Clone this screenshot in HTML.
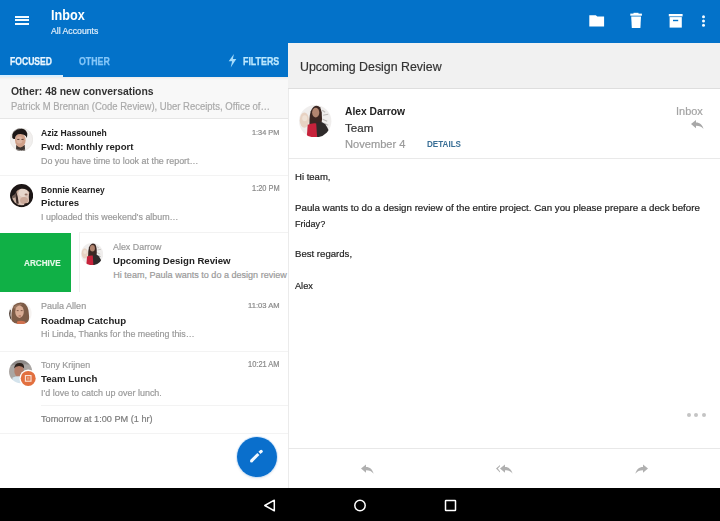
<!DOCTYPE html>
<html><head><meta charset="utf-8"><style>
html,body{margin:0;padding:0;}
body{width:720px;height:521px;overflow:hidden;position:relative;background:#fff;font-family:"Liberation Sans", sans-serif;}
.t{position:absolute;white-space:nowrap;line-height:1;transform-origin:0 0;}
</style></head><body>
<div style="position:absolute;left:0;top:0;width:720px;height:43px;background:#0372C9"></div><div style="position:absolute;left:0;top:43px;width:288px;height:34px;background:#0372C9"></div><div style="position:absolute;left:15.3px;top:15.7px;width:13.6px;height:2px;background:#f4fbff"></div><div style="position:absolute;left:15.3px;top:19.4px;width:13.6px;height:2px;background:#f4fbff"></div><div style="position:absolute;left:15.3px;top:23.4px;width:13.6px;height:2px;background:#f4fbff"></div><div class="t" style="left:50.50px;top:8.00px;font-size:14.24px;color:#fff;font-weight:700;transform:scaleX(0.8897);">Inbox</div>
<div class="t" style="left:50.50px;top:27.00px;font-size:9.16px;color:#e0eefa;font-weight:400;transform:scaleX(0.9483);-webkit-text-stroke:0.2px currentColor;">All Accounts</div>
<div class="t" style="left:9.70px;top:57.00px;font-size:10.30px;color:#eaf6ff;font-weight:700;transform:scaleX(0.8340);-webkit-text-stroke:0.25px currentColor;">FOCUSED</div>
<div class="t" style="left:79.20px;top:57.00px;font-size:10.30px;color:#84c6f8;font-weight:700;transform:scaleX(0.8544);-webkit-text-stroke:0.25px currentColor;">OTHER</div>
<div class="t" style="left:242.80px;top:57.00px;font-size:10.30px;color:#bde8fd;font-weight:700;transform:scaleX(0.8589);-webkit-text-stroke:0.25px currentColor;">FILTERS</div>
<svg style="position:absolute;left:227px;top:53px" width="11" height="15" viewBox="0 0 11 15"><path d="M6.9 0.9 L1.7 8.3 L5.1 8.3 L3.7 14.4 L9.3 6.1 L5.9 6.1 Z" fill="#a6dcfb"/></svg><div style="position:absolute;left:0;top:75px;width:63px;height:2px;background:#d8efff"></div><svg style="position:absolute;left:585px;top:8px" width="130" height="24" viewBox="585 8 130 24">
<path d="M589.3 15.3 H595.8 L597.3 16.6 H604.1 V26.5 H589.3 Z" fill="#fff"/>
<rect x="630.3" y="13.6" width="11.6" height="2.1" fill="#fff"/>
<rect x="633.5" y="12.8" width="5" height="1.2" fill="#fff"/>
<path d="M631.2 16.6 H641 L640.4 28 H631.8 Z" fill="#fff"/>
<rect x="668.8" y="14" width="13.8" height="2.4" fill="#fff"/>
<path d="M669.6 17.1 H681.8 V27.6 H669.6 Z" fill="#fff"/>
<rect x="673" y="19.8" width="5.2" height="1.4" fill="#0372C9"/>
<circle cx="703.5" cy="16.7" r="1.5" fill="#f4fbff"/>
<circle cx="703.5" cy="21" r="1.5" fill="#f4fbff"/>
<circle cx="703.5" cy="25.3" r="1.5" fill="#f4fbff"/>
</svg><div style="position:absolute;left:0;top:77px;width:288px;height:42px;background:#f8f8f8;border-bottom:1px solid #e6e6e6;box-sizing:border-box"></div><div style="position:absolute;left:0;top:77px;width:288px;height:3px;background:linear-gradient(#ececec,#f8f8f8)"></div><div class="t" style="left:11.10px;top:85.00px;font-size:11.63px;color:#333;font-weight:700;transform:scaleX(0.8977);">Other: 48 new conversations</div>
<div class="t" style="left:11.00px;top:101.00px;font-size:10.61px;color:#aaa;font-weight:400;transform:scaleX(0.8951);-webkit-text-stroke:0.2px currentColor;">Patrick M Brennan (Code Review), Uber Receipts, Office of…</div>
<div style="position:absolute;left:0;top:175px;width:288px;height:1px;background:#f3f3f3"></div><div style="position:absolute;left:0;top:351px;width:288px;height:1px;background:#f3f3f3"></div><div style="position:absolute;left:0;top:433px;width:288px;height:1px;background:#f3f3f3"></div><div class="t" style="left:41.10px;top:129.00px;font-size:9.16px;color:#222;font-weight:700;transform:scaleX(0.9350);">Aziz Hassouneh</div>
<div class="t" style="left:41.10px;top:142.00px;font-size:9.88px;color:#222;font-weight:700;transform:scaleX(0.9754);">Fwd: Monthly report</div>
<div class="t" style="left:41.10px;top:157.00px;font-size:9.01px;color:#9a9a9a;font-weight:400;transform:scaleX(0.9897);-webkit-text-stroke:0.2px currentColor;">Do you have time to look at the report…</div>
<div class="t" style="left:252.30px;top:129.00px;font-size:7.41px;color:#8a8a8a;font-weight:400;transform:scaleX(0.9889);-webkit-text-stroke:0.2px currentColor;">1:34 PM</div>
<div class="t" style="left:41.10px;top:186.00px;font-size:9.16px;color:#222;font-weight:700;transform:scaleX(0.9138);">Bonnie Kearney</div>
<div class="t" style="left:41.10px;top:198.00px;font-size:9.88px;color:#222;font-weight:700;transform:scaleX(0.9782);">Pictures</div>
<div class="t" style="left:41.10px;top:213.00px;font-size:9.01px;color:#9a9a9a;font-weight:400;transform:scaleX(0.9869);-webkit-text-stroke:0.2px currentColor;">I uploaded this weekend's album…</div>
<div class="t" style="left:252.30px;top:185.00px;font-size:8.28px;color:#8a8a8a;font-weight:400;transform:scaleX(0.8978);-webkit-text-stroke:0.2px currentColor;">1:20 PM</div>
<div style="position:absolute;left:0;top:233px;width:71px;height:59px;background:#10b046"></div><div class="t" style="left:24.20px;top:258.00px;font-size:9.45px;color:#e4f8e8;font-weight:700;transform:scaleX(0.8654);-webkit-text-stroke:0.15px currentColor;">ARCHIVE</div>
<div style="position:absolute;left:79px;top:232px;width:209px;height:60px;border-left:1px solid #f0f0f0;border-top:1px solid #f2f2f2;box-sizing:border-box"></div><div style="position:absolute;left:71px;top:233px;width:217px;height:59px;overflow:hidden"><div class="t" style="left:42.30px;top:10.00px;font-size:9.16px;color:#9a9a9a;font-weight:400;transform:scaleX(0.9710);-webkit-text-stroke:0.2px currentColor;">Alex Darrow</div>
<div class="t" style="left:42.30px;top:23.00px;font-size:9.88px;color:#222;font-weight:700;transform:scaleX(0.9739);">Upcoming Design Review</div>
<div class="t" style="left:42.30px;top:38.00px;font-size:9.05px;color:#9a9a9a;font-weight:400;-webkit-text-stroke:0.2px currentColor;">Hi team, Paula wants to do a design review of the entire project</div>
</div><div class="t" style="left:41.10px;top:302.00px;font-size:9.16px;color:#9a9a9a;font-weight:400;transform:scaleX(0.9853);-webkit-text-stroke:0.2px currentColor;">Paula Allen</div>
<div class="t" style="left:41.10px;top:316.00px;font-size:9.88px;color:#222;font-weight:700;transform:scaleX(0.9752);">Roadmap Catchup</div>
<div class="t" style="left:41.10px;top:330.00px;font-size:9.01px;color:#9a9a9a;font-weight:400;transform:scaleX(0.9890);-webkit-text-stroke:0.2px currentColor;">Hi Linda, Thanks for the meeting this…</div>
<div class="t" style="left:248.30px;top:302.00px;font-size:7.56px;color:#8a8a8a;font-weight:400;transform:scaleX(1.0072);-webkit-text-stroke:0.2px currentColor;">11:03 AM</div>
<div class="t" style="left:41.30px;top:361.00px;font-size:9.16px;color:#9a9a9a;font-weight:400;transform:scaleX(0.9744);-webkit-text-stroke:0.2px currentColor;">Tony Krijnen</div>
<div class="t" style="left:41.30px;top:374.00px;font-size:9.88px;color:#222;font-weight:700;transform:scaleX(0.9813);">Team Lunch</div>
<div class="t" style="left:41.30px;top:389.00px;font-size:9.01px;color:#9a9a9a;font-weight:400;transform:scaleX(0.9963);-webkit-text-stroke:0.2px currentColor;">I'd love to catch up over lunch.</div>
<div class="t" style="left:248.00px;top:361.00px;font-size:8.14px;color:#8a8a8a;font-weight:400;transform:scaleX(0.9189);-webkit-text-stroke:0.2px currentColor;">10:21 AM</div>
<div style="position:absolute;left:41px;top:405px;width:247px;height:1px;background:#f3f3f3"></div><div class="t" style="left:41.30px;top:414.00px;font-size:9.74px;color:#7c7c7c;font-weight:400;transform:scaleX(0.9425);-webkit-text-stroke:0.2px currentColor;">Tomorrow at 1:00 PM (1 hr)</div>
<svg style="position:absolute;left:9.5px;top:128.0px" width="23.0" height="23.0" viewBox="-11.5 -11.5 23.0 23.0"><defs><clipPath id="c210_1395"><circle r="11.5"/></clipPath><filter id="f210_1395" x="-50%" y="-50%" width="200%" height="200%"><feGaussianBlur stdDeviation="0.6"/></filter></defs><g clip-path="url(#c210_1395)"><g filter="url(#f210_1395)"><rect x="-13" y="-13" width="26" height="26" fill="#f1efee"/><path d="M-5.8 13 L-5.2 5.5 H3.2 L3.8 13 Z" fill="#3e3530"/><ellipse cx="-1.2" cy="0.8" rx="5.3" ry="7.1" fill="#cfa089"/><ellipse cx="-2" cy="0.5" rx="3" ry="3.6" fill="#dcb5a2"/><path d="M-9.3 -2 Q-10 -9.5 -3 -11.2 Q4 -12 5.8 -6 Q6 -3 5 -1.5 Q4.5 -5 -1 -5.4 Q-6 -5.5 -6.6 -0.5 Q-8.5 0 -9.3 -2 Z" fill="#1f1815"/><rect x="-4.3" y="-0.6" width="2.2" height="1" fill="#5a3e32"/><rect x="-0.1" y="-0.6" width="2.2" height="1" fill="#5a3e32"/></g></g><circle r="11.2" fill="none" stroke="#e8e5e3" stroke-width="0.6"/></svg><svg style="position:absolute;left:9.65px;top:184.4px" width="23.2" height="23.2" viewBox="-11.6 -11.6 23.2 23.2"><defs><clipPath id="c212_1960"><circle r="11.6"/></clipPath><filter id="f212_1960" x="-50%" y="-50%" width="200%" height="200%"><feGaussianBlur stdDeviation="0.65"/></filter></defs><g clip-path="url(#c212_1960)"><g filter="url(#f212_1960)"><rect x="-13" y="-13" width="26" height="26" fill="#c4a595"/><ellipse cx="-6" cy="3" rx="4" ry="5.5" fill="#cbb0a2"/><ellipse cx="1.8" cy="1.5" rx="6.2" ry="9" fill="#dcc4b8"/><ellipse cx="1.5" cy="-3" rx="4.5" ry="4.5" fill="#e6d6cc"/><ellipse cx="2.5" cy="5" rx="4" ry="3.5" fill="#caa898"/><path d="M-6.5 -4 Q-4.5 1 -4 8" stroke="#3a2c26" stroke-width="2.2" fill="none"/><ellipse cx="-8" cy="-1" rx="2.2" ry="3.5" fill="#6e5a52"/><ellipse cx="4.5" cy="-1" rx="1.5" ry="1" fill="#9a786a"/><ellipse cx="9.8" cy="1.5" rx="2.6" ry="7.5" fill="#1f1816"/><ellipse cx="4.8" cy="9" rx="2.4" ry="1.6" fill="#3a2a24"/><path d="M-12 -1 Q-9 -12 1 -12 Q10 -12 12 -3 L8 -3 Q5 -7.5 -0.5 -6.8 Q-5 -6 -6.5 -1.5 Q-8 0 -12 2 Z" fill="#1d1715"/><circle r="10.7" fill="none" stroke="#1d1715" stroke-width="2"/></g></g></svg><svg style="position:absolute;left:81.10000000000001px;top:243.3px" width="22.2" height="22.2" viewBox="-11.1 -11.1 22.2 22.2"><defs><clipPath id="c922_2544"><circle r="11.1"/></clipPath><filter id="f922_2544" x="-50%" y="-50%" width="200%" height="200%"><feGaussianBlur stdDeviation="0.55"/></filter></defs><g clip-path="url(#c922_2544)"><g filter="url(#f922_2544)"><g transform="scale(0.68)"><rect x="-17" y="-17" width="34" height="34" fill="#f0eeed"/><path d="M7 -11 L10 -9 M8 -6 L13 -7 M7.5 -2 L12 0 M9 2 L13 4" stroke="#bdb9b7" stroke-width="1.1"/><ellipse cx="-10.8" cy="-1" rx="4.6" ry="7.6" fill="#e7d2c3"/><ellipse cx="-10.5" cy="-3" rx="2.5" ry="3" fill="#efe2d6"/><path d="M-5.5 8 Q-6.5 -3 -4.5 -10 Q-2 -15.5 1.5 -15.5 Q5.5 -15.5 6.5 -9 Q7.5 -2 6 6 Z" fill="#3a2823"/><ellipse cx="0.5" cy="-8.6" rx="3.6" ry="4.9" fill="#b2856f"/><path d="M-8.5 17 L-7.5 3.5 Q-2.5 1 3.5 2.5 L4.5 17 Z" fill="#c6243a"/><path d="M2 17 L1 2 Q6 -1 10 3 Q14 8 15.5 17 Z" fill="#2d2a2c"/></g></g></g></svg><svg style="position:absolute;left:9.2px;top:301.7px" width="22.6" height="22.6" viewBox="-11.3 -11.3 22.6 22.6"><defs><clipPath id="c205_3130"><circle r="11.3"/></clipPath><filter id="f205_3130" x="-50%" y="-50%" width="200%" height="200%"><feGaussianBlur stdDeviation="0.55"/></filter></defs><g clip-path="url(#c205_3130)"><g filter="url(#f205_3130)"><rect x="-13" y="-13" width="26" height="26" fill="#f6f3f1"/><path d="M-8.5 10 Q-10 -2 -6.5 -8 Q-2 -12 3 -10.5 Q8 -8 8.5 0 Q9.5 7 7 11 Z" fill="#7d5b47"/><path d="M-7 -6 Q-3 -10 2 -9 Q-2 -7 -4 -3 Z" fill="#9a7660"/><path d="M-10.5 -4 Q-12 3 -10 7 L-9 6.5 Q-10.5 2 -9.5 -3 Z" fill="#3a2a20"/><ellipse cx="-0.8" cy="-1.6" rx="4.3" ry="6.2" fill="#d9ad95"/><path d="M-4 13 L-3 8 Q1 6.5 5 8.5 L6 13 Z" fill="#d0714f"/><rect x="-3.6" y="-3" width="1.9" height="0.8" fill="#6a4636"/><rect x="0.4" y="-3" width="1.9" height="0.8" fill="#6a4636"/><rect x="-1.7" y="2.2" width="2.4" height="0.9" fill="#a0604e"/></g></g></svg><svg style="position:absolute;left:9.4px;top:360.4px" width="23.2" height="23.2" viewBox="-11.6 -11.6 23.2 23.2"><defs><clipPath id="c210_3720"><circle r="11.6"/></clipPath><filter id="f210_3720" x="-50%" y="-50%" width="200%" height="200%"><feGaussianBlur stdDeviation="0.55"/></filter></defs><g clip-path="url(#c210_3720)"><g filter="url(#f210_3720)"><rect x="-13" y="-13" width="26" height="26" fill="#aaa6a3"/><path d="M-13 -13 H13 V-6 Q0 -9 -13 -5 Z" fill="#8e8a88"/><ellipse cx="-1.5" cy="-0.5" rx="4.8" ry="6.3" fill="#b47d68"/><path d="M-6.5 -3 Q-6 -8.5 -1 -8.5 Q4 -8.5 3.5 -3 Q2 -5.5 -1.5 -5.5 Q-5 -5.5 -6.5 -3 Z" fill="#2e211c"/><path d="M-9 13 L-8 6 Q-2 3.5 4 6 L5 13 Z" fill="#d4e3ec"/></g></g></svg><svg style="position:absolute;left:19px;top:369px" width="19" height="19" viewBox="0 0 19 19"><circle cx="9.2" cy="9.4" r="8.8" fill="#fff"/><circle cx="9.2" cy="9.4" r="7.5" fill="#e2703f"/><rect x="6.4" y="6.6" width="5.6" height="5.6" fill="none" stroke="#fbe6dc" stroke-width="1.1"/><rect x="7.9" y="8.1" width="2.6" height="2.6" fill="#e9a07e"/></svg><div style="position:absolute;left:237px;top:436.5px;width:40px;height:40px;border-radius:50%;background:#0a6fcc;box-shadow:0 0 0 1px rgba(190,222,255,0.6),0 1px 3px rgba(0,0,0,0.12)"></div><svg style="position:absolute;left:237px;top:436.5px" width="40" height="40" viewBox="0 0 40 40"><path d="M14.5 23.9 L21.4 17.0" stroke="#f2f9ff" stroke-width="3" stroke-linecap="butt"/><circle cx="14.5" cy="23.9" r="1.5" fill="#f2f9ff"/><path d="M22.5 15.9 L24.2 14.2" stroke="#f2f9ff" stroke-width="3" stroke-linecap="butt"/><circle cx="24.2" cy="14.2" r="1.5" fill="#f2f9ff"/></svg><div style="position:absolute;left:287.5px;top:43px;width:1px;height:445px;background:#ebebeb"></div><div style="position:absolute;left:288px;top:43px;width:432px;height:46px;background:#f1f1f1;border-bottom:1px solid #dedede;box-sizing:border-box"></div><div class="t" style="left:300.20px;top:60.00px;font-size:13.50px;color:#333;font-weight:400;transform:scaleX(0.9159);-webkit-text-stroke:0.2px currentColor;">Upcoming Design Review</div>
<svg style="position:absolute;left:299.2px;top:104.8px" width="32.4" height="32.4" viewBox="-16.2 -16.2 32.4 32.4"><defs><clipPath id="c3154_1210"><circle r="16.2"/></clipPath><filter id="f3154_1210" x="-50%" y="-50%" width="200%" height="200%"><feGaussianBlur stdDeviation="0.5"/></filter></defs><g clip-path="url(#c3154_1210)"><g filter="url(#f3154_1210)"><g transform="scale(1.0)"><rect x="-17" y="-17" width="34" height="34" fill="#f0eeed"/><path d="M7 -11 L10 -9 M8 -6 L13 -7 M7.5 -2 L12 0 M9 2 L13 4" stroke="#bdb9b7" stroke-width="1.1"/><ellipse cx="-10.8" cy="-1" rx="4.6" ry="7.6" fill="#e7d2c3"/><ellipse cx="-10.5" cy="-3" rx="2.5" ry="3" fill="#efe2d6"/><path d="M-5.5 8 Q-6.5 -3 -4.5 -10 Q-2 -15.5 1.5 -15.5 Q5.5 -15.5 6.5 -9 Q7.5 -2 6 6 Z" fill="#3a2823"/><ellipse cx="0.5" cy="-8.6" rx="3.6" ry="4.9" fill="#b2856f"/><path d="M-8.5 17 L-7.5 3.5 Q-2.5 1 3.5 2.5 L4.5 17 Z" fill="#c6243a"/><path d="M2 17 L1 2 Q6 -1 10 3 Q14 8 15.5 17 Z" fill="#2d2a2c"/></g></g></g></svg><div class="t" style="left:345.00px;top:107.00px;font-size:10.20px;color:#222;font-weight:700;transform:scaleX(1.0110);">Alex Darrow</div>
<div class="t" style="left:345.00px;top:123.00px;font-size:11.20px;color:#333;font-weight:400;transform:scaleX(1.0371);-webkit-text-stroke:0.2px currentColor;">Team</div>
<div class="t" style="left:345.00px;top:139.00px;font-size:11.20px;color:#9a9a9a;font-weight:400;transform:scaleX(0.9917);-webkit-text-stroke:0.2px currentColor;">November 4</div>
<div class="t" style="left:426.70px;top:140.00px;font-size:9.16px;color:#3a6f96;font-weight:700;transform:scaleX(0.8832);">DETAILS</div>
<div class="t" style="left:676.20px;top:106.00px;font-size:11.20px;color:#a3a3a3;font-weight:400;transform:scaleX(0.9783);-webkit-text-stroke:0.2px currentColor;">Inbox</div>
<svg style="position:absolute;left:690px;top:119px" width="15" height="12" viewBox="0 0 15 12"><path d="M1 5 L6 1 V3.5 C10 3.5 12.5 6 13.5 10 C11.8 7.6 9.5 6.7 6 6.7 V9.2 Z" fill="#a8a8a8"/></svg><div style="position:absolute;left:288px;top:158px;width:432px;height:1px;background:#e9e9e9"></div><div class="t" style="left:295.00px;top:172.00px;font-size:9.80px;color:#242424;font-weight:400;transform:scaleX(0.9730);-webkit-text-stroke:0.2px currentColor;">Hi team,</div>
<div class="t" style="left:295.00px;top:203.00px;font-size:9.80px;color:#242424;font-weight:400;transform:scaleX(0.9939);-webkit-text-stroke:0.2px currentColor;">Paula wants to do a design review of the entire project. Can you please prepare a deck before</div>
<div class="t" style="left:294.90px;top:219.00px;font-size:9.80px;color:#242424;font-weight:400;transform:scaleX(0.9240);-webkit-text-stroke:0.2px currentColor;">Friday?</div>
<div class="t" style="left:294.90px;top:249.00px;font-size:9.80px;color:#242424;font-weight:400;transform:scaleX(0.9797);-webkit-text-stroke:0.2px currentColor;">Best regards,</div>
<div class="t" style="left:295.00px;top:281.00px;font-size:9.80px;color:#242424;font-weight:400;transform:scaleX(0.9338);-webkit-text-stroke:0.2px currentColor;">Alex</div>
<div style="position:absolute;left:686.8px;top:413.3px;width:4px;height:4px;border-radius:50%;background:#c4c4c4"></div><div style="position:absolute;left:694.3px;top:413.3px;width:4px;height:4px;border-radius:50%;background:#c4c4c4"></div><div style="position:absolute;left:701.7px;top:413.3px;width:4px;height:4px;border-radius:50%;background:#c4c4c4"></div><div style="position:absolute;left:288px;top:448px;width:432px;height:1px;background:#e8e8e8"></div><svg style="position:absolute;left:360px;top:463.8px" width="15" height="11" viewBox="0 0 15 11"><path d="M1 4.6 L6 0.6 V3.1 C10 3.1 12.6 5.6 13.6 9.8 C11.8 7.3 9.5 6.3 6 6.3 V8.8 Z" fill="#b0b0b0"/></svg><svg style="position:absolute;left:495px;top:463.8px" width="19" height="11" viewBox="0 0 19 11"><path d="M1 4.6 L5 0.9 V2.2 L2.8 4.6 L5 7.2 V8.5 Z" fill="#b0b0b0"/><path d="M5 4.6 L10 0.6 V3.1 C14 3.1 16.6 5.6 17.6 9.8 C15.8 7.3 13.5 6.3 10 6.3 V8.8 Z" fill="#b0b0b0"/></svg><svg style="position:absolute;left:634px;top:463.8px" width="15" height="11" viewBox="0 0 15 11"><path d="M14 4.6 L9 0.6 V3.1 C5 3.1 2.4 5.6 1.4 9.8 C3.2 7.3 5.5 6.3 9 6.3 V8.8 Z" fill="#b0b0b0"/></svg><div style="position:absolute;left:0;top:488px;width:720px;height:33px;background:#000"></div><svg style="position:absolute;left:0;top:488px" width="720" height="33" viewBox="0 488 720 33"><path d="M274.3 500.2 L264.8 505.5 L274.3 510.8 Z" fill="none" stroke="#fff" stroke-width="1.5" stroke-linejoin="round"/><circle cx="360" cy="505.5" r="5.2" fill="none" stroke="#fff" stroke-width="1.5"/><rect x="445.5" y="500.5" width="10" height="10" fill="none" stroke="#fff" stroke-width="1.5" rx="0.5"/></svg>
</body></html>
